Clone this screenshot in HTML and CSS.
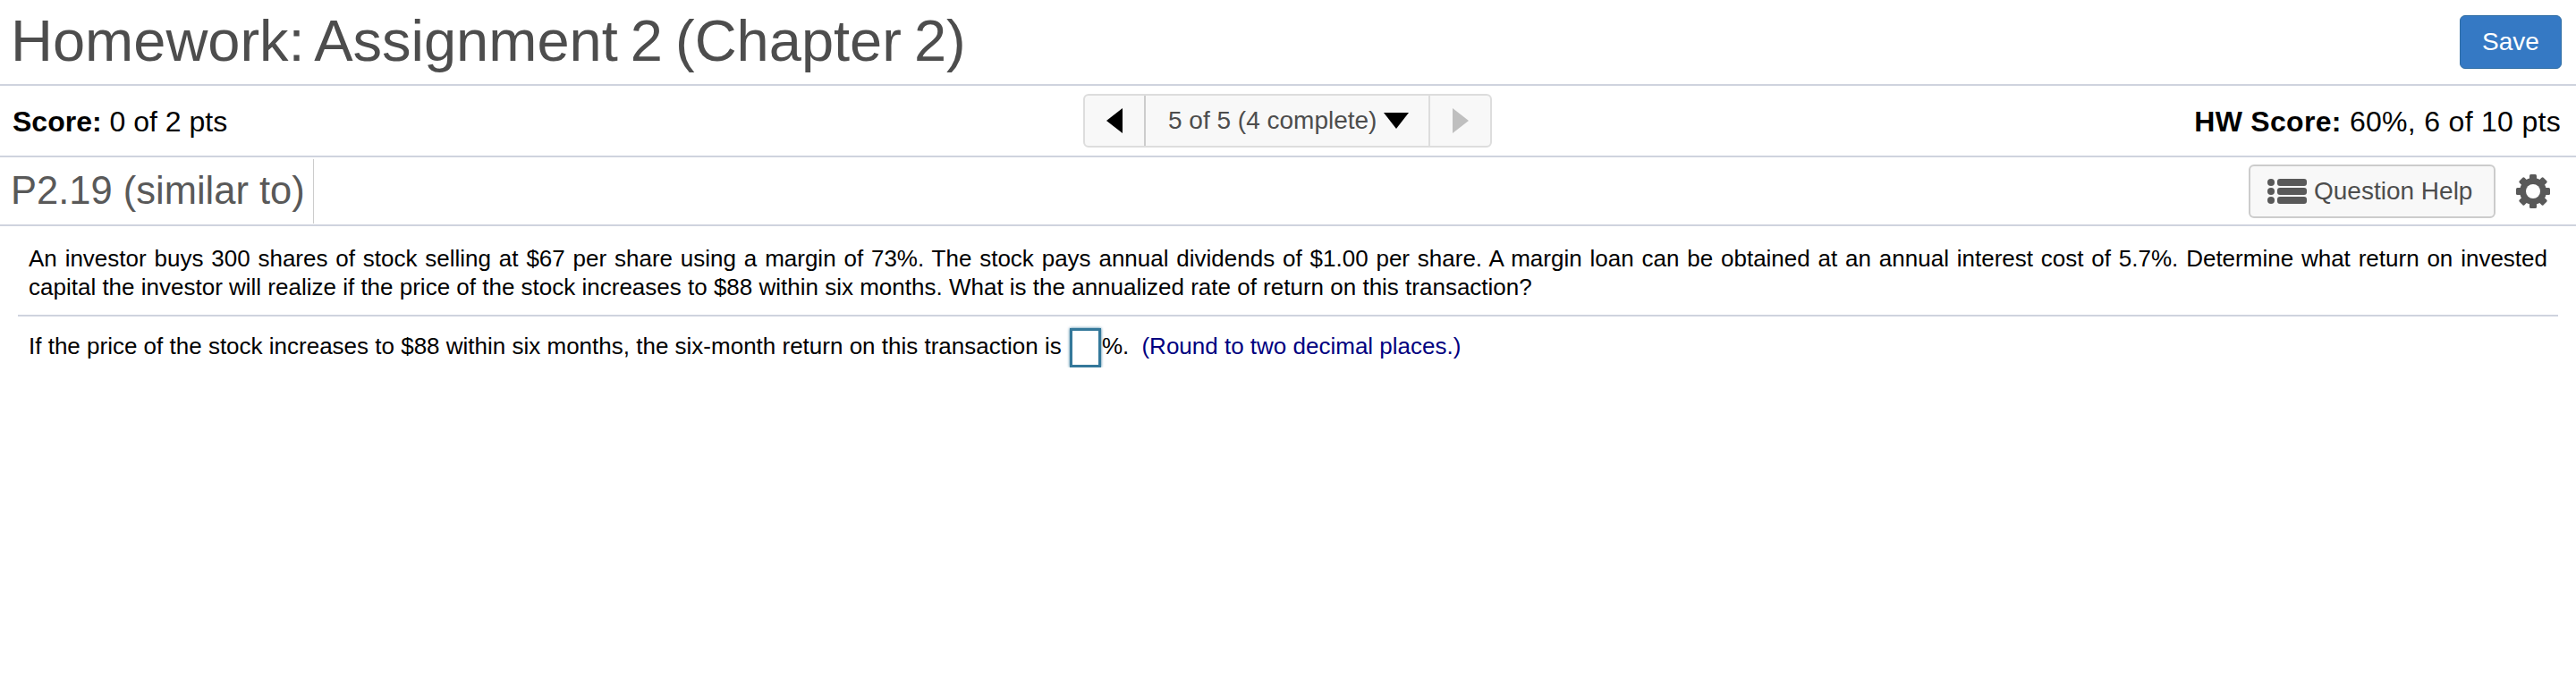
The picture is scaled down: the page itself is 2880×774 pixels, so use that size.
FILE: index.html
```html
<!DOCTYPE html>
<html lang="en">
<head>
  <meta charset="UTF-8" />
  <title>Homework: Assignment 2 (Chapter 2)</title>
  <link rel="stylesheet" href="styles.css">
</head>
<body>
  <div class="title-bar">
    <h1>Homework: Assignment 2 (Chapter 2)</h1>
    <button class="save-btn">Save</button>
  </div>

  <div class="score-bar">
    <div class="score"><b>Score:</b> 0 of 2 pts</div>
    <div class="pager">
      <span class="pager-btn pager-prev"><span class="arrow-left"></span></span>
      <span class="pager-label">5 of 5 (4 complete)<span class="arrow-down"></span></span>
      <span class="pager-btn pager-next"><span class="arrow-right"></span></span>
    </div>
    <div class="score score-right"><b>HW Score:</b> 60%, 6 of 10 pts</div>
  </div>

  <div class="question-bar">
    <h2>P2.19 (similar to)</h2>
    <div class="question-tools">
      <button class="help-btn">
        <svg class="help-icon" viewBox="0 0 44 28" width="44" height="28">
          <circle cx="4" cy="4" r="4"/>
          <circle cx="4" cy="14" r="4"/>
          <circle cx="4" cy="24" r="4"/>
          <rect x="11" y="0" width="33" height="8" rx="3"/>
          <rect x="11" y="10" width="33" height="8" rx="3"/>
          <rect x="11" y="20" width="33" height="8" rx="3"/>
        </svg>
        Question Help
      </button>
      <svg class="gear" viewBox="0 0 40 40" width="40" height="40">
        <circle cx="20" cy="20" r="15"/>
        <rect x="16" y="1" width="8" height="8" rx="1.5"/>
        <rect x="16" y="1" width="8" height="8" rx="1.5" transform="rotate(45 20 20)"/>
        <rect x="16" y="1" width="8" height="8" rx="1.5" transform="rotate(90 20 20)"/>
        <rect x="16" y="1" width="8" height="8" rx="1.5" transform="rotate(135 20 20)"/>
        <rect x="16" y="1" width="8" height="8" rx="1.5" transform="rotate(180 20 20)"/>
        <rect x="16" y="1" width="8" height="8" rx="1.5" transform="rotate(225 20 20)"/>
        <rect x="16" y="1" width="8" height="8" rx="1.5" transform="rotate(270 20 20)"/>
        <rect x="16" y="1" width="8" height="8" rx="1.5" transform="rotate(315 20 20)"/>
        <circle class="gear-hole" cx="20" cy="20" r="8"/>
      </svg>
    </div>
  </div>

  <div class="question-body">
    <p class="statement">An investor buys 300 shares of stock selling at $67 per share using a margin of 73%. The stock pays annual dividends of $1.00 per share. A margin loan can be obtained at an annual interest cost of 5.7%. Determine what return on invested capital the investor will realize if the price of the stock increases to $88 within six months. What is the annualized rate of return on this transaction?</p>
    <div class="answer-row">
      If the price of the stock increases to $88 within six months, the six-month return on this transaction is
      <span class="answer-box"></span>%.
      <span class="hint">(Round to two decimal places.)</span>
    </div>
  </div>
</body>
</html>
```

FILE: styles.css
```css
body {
  margin: 0;
  background: #fff;
  font-family: "Liberation Sans", Arial, sans-serif;
  color: #000;
}
h1, h2, p {
  margin: 0;
  font-weight: normal;
}
button {
  font-family: inherit;
}
.title-bar {
  display: flex;
  justify-content: space-between;
  align-items: center;
  height: 94px;
  padding: 0 16px 0 12px;
  border-bottom: 2px solid #cfd3de;
}
h1 {
  padding-bottom: 3px;
  font-size: 65px;
  word-spacing: -4px;
  color: #4d4d4d;
}
.save-btn {
  width: 114px;
  height: 60px;
  border: 1px solid #2e6da4;
  border-radius: 6px;
  background: #3579c4;
  color: #fff;
  font-size: 28px;
}
.score-bar {
  display: grid;
  grid-template-columns: 1fr auto 1fr;
  align-items: center;
  height: 78px;
  padding: 0 17px 0 14px;
  border-bottom: 2px solid #cfd3de;
}
.score {
  padding-top: 2px;
  font-size: 32px;
}
.score-right {
  text-align: right;
  letter-spacing: 0.3px;
}
.pager {
  display: flex;
  height: 60px;
  margin-left: 2px;
  border: 2px solid #ddd;
  border-radius: 6px;
  background: #f8f8f8;
  box-sizing: border-box;
}
.pager-btn {
  display: flex;
  align-items: center;
  justify-content: center;
}
.pager-prev {
  width: 66px;
  border-right: 2px solid #ccc;
}
.pager-next {
  width: 67px;
  border-left: 2px solid #ddd;
}
.pager-label {
  display: flex;
  align-items: center;
  width: 316px;
  padding-left: 25px;
  box-sizing: border-box;
  font-size: 28px;
  color: #4d4d4d;
}
.arrow-left {
  border-style: solid;
  border-width: 14px 18px 14px 0;
  border-color: transparent #000 transparent transparent;
}
.arrow-right {
  border-style: solid;
  border-width: 14px 0 14px 18px;
  border-color: transparent transparent transparent #bfbfbf;
}
.arrow-down {
  margin-left: 8px;
  border-style: solid;
  border-width: 18px 14px 0 14px;
  border-color: #000 transparent transparent transparent;
}
.question-bar {
  display: flex;
  justify-content: space-between;
  align-items: center;
  height: 75px;
  padding-left: 12px;
  border-bottom: 2px solid #cfd3de;
}
h2 {
  display: flex;
  align-items: center;
  height: 72px;
  padding-right: 9px;
  border-right: 1px solid #ccc;
  font-size: 43.5px;
  color: #595959;
}
.question-tools {
  display: flex;
  align-items: center;
  gap: 22px;
  padding-right: 28px;
}
.help-btn {
  display: flex;
  align-items: center;
  gap: 8px;
  width: 276px;
  height: 60px;
  padding: 0 0 0 19px;
  border: 2px solid #ccc;
  border-radius: 6px;
  background: #f8f8f8;
  color: #4d4d4d;
  font-size: 28px;
}
.help-icon, .gear {
  fill: #595959;
}
.gear .gear-hole {
  fill: #fff;
}
.question-body {
  padding: 20px 20px 0;
  font-size: 26px;
}
.statement {
  padding: 0 12px 15px;
  line-height: 32px;
  text-align: justify;
  border-bottom: 2px solid #cfd3de;
}
.answer-row {
  padding: 12px 12px 0;
  line-height: 42px;
  white-space: nowrap;
}
.answer-box {
  display: inline-block;
  width: 29px;
  height: 38px;
  margin: 0 1px 0 2px;
  vertical-align: middle;
  border: 3px solid #34789a;
  box-shadow: 0 0 3px #34789a;
  background: #fff;
}
.hint {
  margin-left: 7px;
  color: #000080;
}
```
